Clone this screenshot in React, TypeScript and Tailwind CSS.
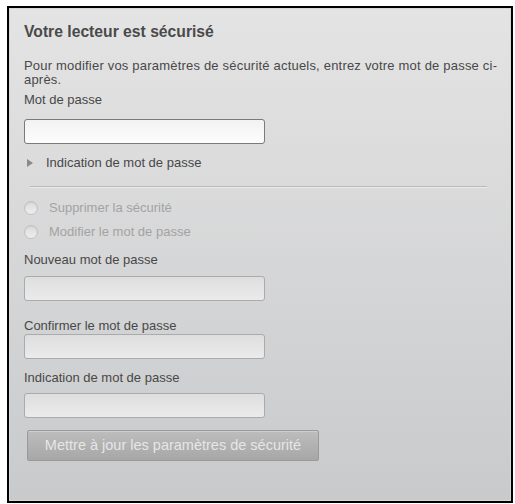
/* ── Security settings panel – current password, hint, new password form ── */

const field =
  'h-[25px] w-[241px] rounded-[3px] border bg-gradient-to-b outline-none';

function Radio({ label }: { label: string }) {
  return (
    <label className="flex h-[24px] items-center gap-[11px]">
      <span className="h-[14px] w-[14px] shrink-0 rounded-full border border-[#c2c2c2] bg-gradient-to-b from-[#dcdcdc] to-[#eeeeee] shadow-[inset_0_1px_1px_rgba(0,0,0,0.08)]" />
      <span className="text-[13px] text-[#a3a3a3]">{label}</span>
    </label>
  );
}

export default function App() {
  return (
    <div
      className="h-[504px] w-[515px] bg-white pl-[7px] pt-[6px]"
      style={{ fontFamily: '"Liberation Sans", Arial, sans-serif' }}
    >
      <div className="h-[497px] w-[506px] border-2 border-black bg-gradient-to-b from-[#e4e4e5] to-[#c9cacb]">
        <div className="h-full w-full border border-[#d6d6d6] px-[14px] pt-[14px] text-[#484848]">
          <h1 className="text-[15.7px] font-bold leading-[18px] text-[#4a4a4a]">
            Votre lecteur est sécurisé
          </h1>

          <p className="mt-[18px] w-[490px] text-[13px] leading-[14px] tracking-[0.2px]">
            Pour modifier vos paramètres de sécurité actuels, entrez votre mot de passe ci-après.
          </p>

          <div className="mt-[5px] text-[13px] leading-[15px]">Mot de passe</div>
          <input
            type="password"
            className={`${field} mt-[12px] block border-[#7a7a7a] from-[#f2f2f2] to-[#fdfdfd]`}
          />

          <div className="mt-[11px] flex items-center text-[13px] leading-[15px]">
            <svg width="6" height="8" viewBox="0 0 6 8" className="ml-[3px] mr-[13px]">
              <path d="M0 0 L6 4 L0 8 Z" fill="#8a8a8a" />
            </svg>
            Indication de mot de passe
          </div>

          <div className="ml-[6px] mt-[16px] h-px w-[457px] bg-[#b9b9b9] shadow-[0_1px_0_#ececec]" />

          <div className="mt-[9px] flex flex-col">
            <Radio label="Supprimer la sécurité" />
            <Radio label="Modifier le mot de passe" />
          </div>

          <div className="mt-[8px] text-[13px] leading-[15px]">Nouveau mot de passe</div>
          <input
            disabled
            className={`${field} mt-[9px] block border-[#ababab] from-[#dedede] to-[#ebebeb]`}
          />

          <div className="mt-[17px] text-[13px] leading-[15px]">Confirmer le mot de passe</div>
          <input
            disabled
            className={`${field} mt-[1px] block border-[#ababab] from-[#dedede] to-[#ebebeb]`}
          />

          <div className="mt-[11px] text-[13px] leading-[15px]">Indication de mot de passe</div>
          <input
            disabled
            className={`${field} mt-[8px] block border-[#ababab] from-[#dedede] to-[#ebebeb]`}
          />

          <button
            disabled
            className="ml-[3px] mt-[12px] flex h-[31px] w-[292px] items-center justify-center rounded-[2px] border border-[#9a9a9a] bg-gradient-to-b from-[#bdbdbd] to-[#a7a7a7] text-[14.5px] text-[#e6e6e6] shadow-[inset_0_1px_0_#cfcfcf]"
          >
            Mettre à jour les paramètres de sécurité
          </button>
        </div>
      </div>
    </div>
  );
}
